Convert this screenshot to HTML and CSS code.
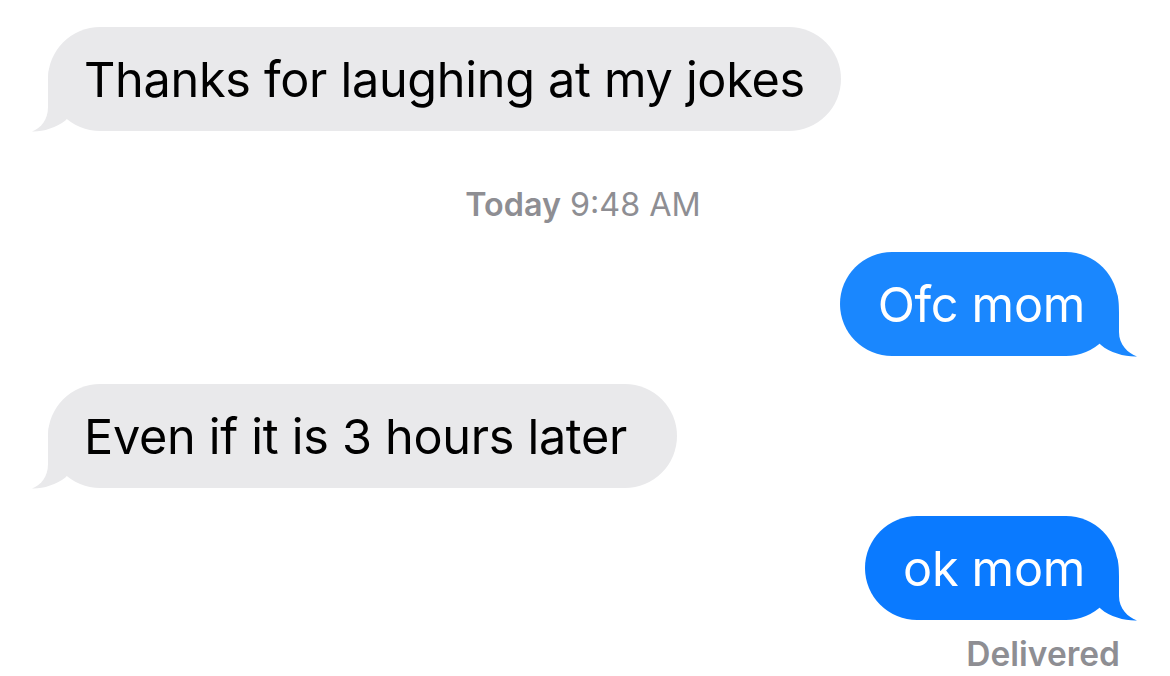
FILE: index.html
```html
<!DOCTYPE html>
<html>
<head>
<meta charset="utf-8">
<link rel="stylesheet" href="styles.css">
</head>
<body>
<div class="thread">
  <div class="row them first">
    <div class="bubble gray">Thanks for laughing at my jokes
      <svg class="tail tail-left" viewBox="0 0 40 64" width="40" height="64"><path d="M40 0 L21.2 0 C20.4 5 20 10 20 20 L20 39 C20 52 13 60 4 63.5 C14 64 28 60 38 52 L40 49 Z" fill="#e9e9eb"/></svg>
    </div>
  </div>
  <div class="stamp"><b>Today</b> 9:48 AM</div>
  <div class="row me">
    <div class="bubble blue b1">Ofc mom
      <svg class="tail tail-right" viewBox="0 0 40 64" width="40" height="64"><path d="M0 0 L18.8 0 C20.5 5 21 10 21 20 L21 39 C21 52 30 60 39 63.5 C28 64 12 60 3 52 L0 49 Z" fill="#1a87fe"/></svg>
    </div>
  </div>
  <div class="row them">
    <div class="bubble gray wide">Even if it is 3 hours later
      <svg class="tail tail-left" viewBox="0 0 40 64" width="40" height="64"><path d="M40 0 L21.2 0 C20.4 5 20 10 20 20 L20 39 C20 52 13 60 4 63.5 C14 64 28 60 38 52 L40 49 Z" fill="#e9e9eb"/></svg>
    </div>
  </div>
  <div class="row me">
    <div class="bubble blue b2">ok mom
      <svg class="tail tail-right" viewBox="0 0 40 64" width="40" height="64"><path d="M0 0 L18.8 0 C20.5 5 21 10 21 20 L21 39 C21 52 30 60 39 63.5 C28 64 12 60 3 52 L0 49 Z" fill="#0a7aff"/></svg>
    </div>
  </div>
  <div class="status">Delivered</div>
</div>
</body>
</html>
```
FILE: styles.css
```css
html, body {
  margin: 0;
  padding: 0;
  background: #ffffff;
}
body {
  width: 1170px;
  height: 676px;
  overflow: hidden;
  font-family: Inter, "Noto Sans", sans-serif;
}
.thread {
  display: flex;
  flex-direction: column;
  padding: 27px 52px 0 48px;
}
.row {
  display: flex;
}
.row.me {
  justify-content: flex-end;
  margin-top: 29px;
}
.row.them:not(.first) {
  margin-top: 28px;
}
.row.me + .row.them + .row.me {
  margin-top: 28px;
}
.bubble {
  position: relative;
  height: 104px;
  box-sizing: border-box;
  padding: 0 36px 0 36px;
  display: flex;
  align-items: center;
  border-radius: 52px;
  font-size: 48.6px;
  letter-spacing: -0.3px;
  white-space: nowrap;
}
.gray {
  background: #e9e9eb;
  color: #000;
}
.gray.wide {
  padding-right: 50px;
}
.blue {
  color: #fff;
  padding: 0 33px 0 38px;
}
.b1 { background: #1a87fe; }
.b2 { background: #0a7aff; }
.tail {
  position: absolute;
  bottom: -1px;
}
.tail-left {
  left: -20px;
}
.tail-right {
  right: -20px;
}
.stamp {
  margin-top: 56px;
  text-align: center;
  color: #8e8e93;
  font-size: 32.3px;
  line-height: 36px;
}
.stamp b {
  font-weight: 600;
}
.status {
  align-self: flex-end;
  margin-top: 16px;
  margin-right: -2px;
  color: #8e8e93;
  font-size: 33.5px;
  font-weight: 600;
  line-height: 36px;
}
```
